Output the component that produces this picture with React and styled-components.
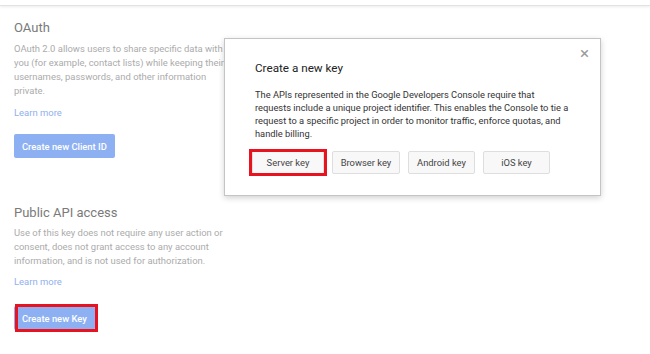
import React from "react";
import styled, { createGlobalStyle } from "styled-components";

const Global = createGlobalStyle`
  html, body { margin: 0; padding: 0; background: #fff; }
  body { font-family: Roboto, "Liberation Sans", Arial, sans-serif; }
`;

const Page = styled.div`
  position: relative;
  width: 650px;
  height: 354px;
  overflow: hidden;
  background: #fff;
`;

const TopBar = styled.div`
  height: 5px;
  border-bottom: 1px solid #e2e2e2;
  box-shadow: 0 1px 3px rgba(0, 0, 0, 0.08);
`;

const Column = styled.div`
  display: flex;
  flex-direction: column;
  align-items: flex-start;
  width: 222px;
  padding: 13px 0 0 14px;
`;

const Section = styled.section`
  display: flex;
  flex-direction: column;
  align-items: flex-start;
  margin-top: ${(p) => p.$top || 0}px;
`;

const Heading = styled.h2`
  margin: 0;
  font-size: 13px;
  line-height: 18px;
  font-weight: 400;
  color: #7a7a7a;
`;

const Desc = styled.p`
  margin: ${(p) => p.$gap}px 0 0;
  font-size: 9.45px;
  line-height: 14px;
  color: #ababab;
`;

const Learn = styled.a`
  margin-top: ${(p) => p.$gap}px;
  font-size: 9.45px;
  line-height: 14px;
  color: #8fb0ee;
  text-decoration: none;
`;

const Highlight = styled.div`
  position: relative;
  margin-top: ${(p) => p.$top}px;
`;

const RedBox = styled.div`
  position: absolute;
  left: ${(p) => p.$l}px;
  top: ${(p) => p.$t}px;
  right: ${(p) => p.$r}px;
  bottom: ${(p) => p.$b}px;
  border: 3px solid #e8131f;
  pointer-events: none;
`;

const BlueButton = styled.button`
  display: block;
  height: 24px;
  padding: 0 8px;
  border: none;
  border-radius: 2px;
  background: #8db0f2;
  color: #fff;
  font-family: inherit;
  font-size: 9.4px;
  font-weight: 500;
`;

const Dialog = styled.div`
  position: absolute;
  left: 224px;
  top: 38px;
  width: 377px;
  height: 158px;
  box-sizing: border-box;
  border: 1px solid #c4c4c4;
  background: #fff;
  box-shadow: 0 2px 6px rgba(0, 0, 0, 0.18);
  padding: 20px 30px 0 30px;
`;

const Close = styled.span`
  position: absolute;
  right: 11px;
  top: 6px;
  font-size: 17px;
  line-height: 16px;
  color: #9a9a9a;
`;

const Title = styled.h3`
  margin: 0;
  font-size: 11.7px;
  line-height: 18px;
  font-weight: 400;
  color: #222;
`;

const Body = styled.p`
  margin: 11px 0 0;
  font-size: 9.3px;
  line-height: 13px;
  color: #333;
`;

const Buttons = styled.div`
  display: flex;
  gap: 8px;
  margin: 11px 0 0 -3px;
`;

const KeyButton = styled.button`
  display: block;
  height: 23px;
  width: ${(p) => p.$w}px;
  padding: 0;
  border: 1px solid #dedede;
  border-radius: 2px;
  background: #f8f8f8;
  color: #444;
  font-family: inherit;
  font-size: 9.4px;
  box-sizing: border-box;
`;

export default function App() {
  return (
    <Page>
      <Global />
      <TopBar />
      <Column>
        <Section>
          <Heading>OAuth</Heading>
          <Desc $gap={5}>
            OAuth 2.0 allows users to share specific data with you (for example,
            contact lists) while keeping their usernames, passwords, and other
            information private.
          </Desc>
          <Learn href="#" $gap={8}>Learn more</Learn>
          <Highlight $top={14}>
            <BlueButton>Create new Client ID</BlueButton>
          </Highlight>
        </Section>
        <Section $top={46}>
          <Heading>Public API access</Heading>
          <Desc $gap={4}>
            Use of this key does not require any user action or consent, does
            not grant access to any account information, and is not used for
            authorization.
          </Desc>
          <Learn href="#" $gap={7}>Learn more</Learn>
          <Highlight $top={17}>
            <BlueButton>Create new Key</BlueButton>
            <RedBox $l={1} $t={-2} $r={-3} $b={-2} />
          </Highlight>
        </Section>
      </Column>
      <Dialog>
        <Close>×</Close>
        <Title>Create a new key</Title>
        <Body>
          The APIs represented in the Google Developers Console require that
          requests include a unique project identifier. This enables the Console
          to tie a request to a specific project in order to monitor traffic,
          enforce quotas, and handle billing.
        </Body>
        <Buttons>
          <Highlight $top={0}>
            <KeyButton $w={72}>Server key</KeyButton>
            <RedBox $l={-3} $t={-2} $r={-3} $b={-2} />
          </Highlight>
          <KeyButton $w={68}>Browser key</KeyButton>
          <KeyButton $w={67}>Android key</KeyButton>
          <KeyButton $w={67}>iOS key</KeyButton>
        </Buttons>
      </Dialog>
    </Page>
  );
}
